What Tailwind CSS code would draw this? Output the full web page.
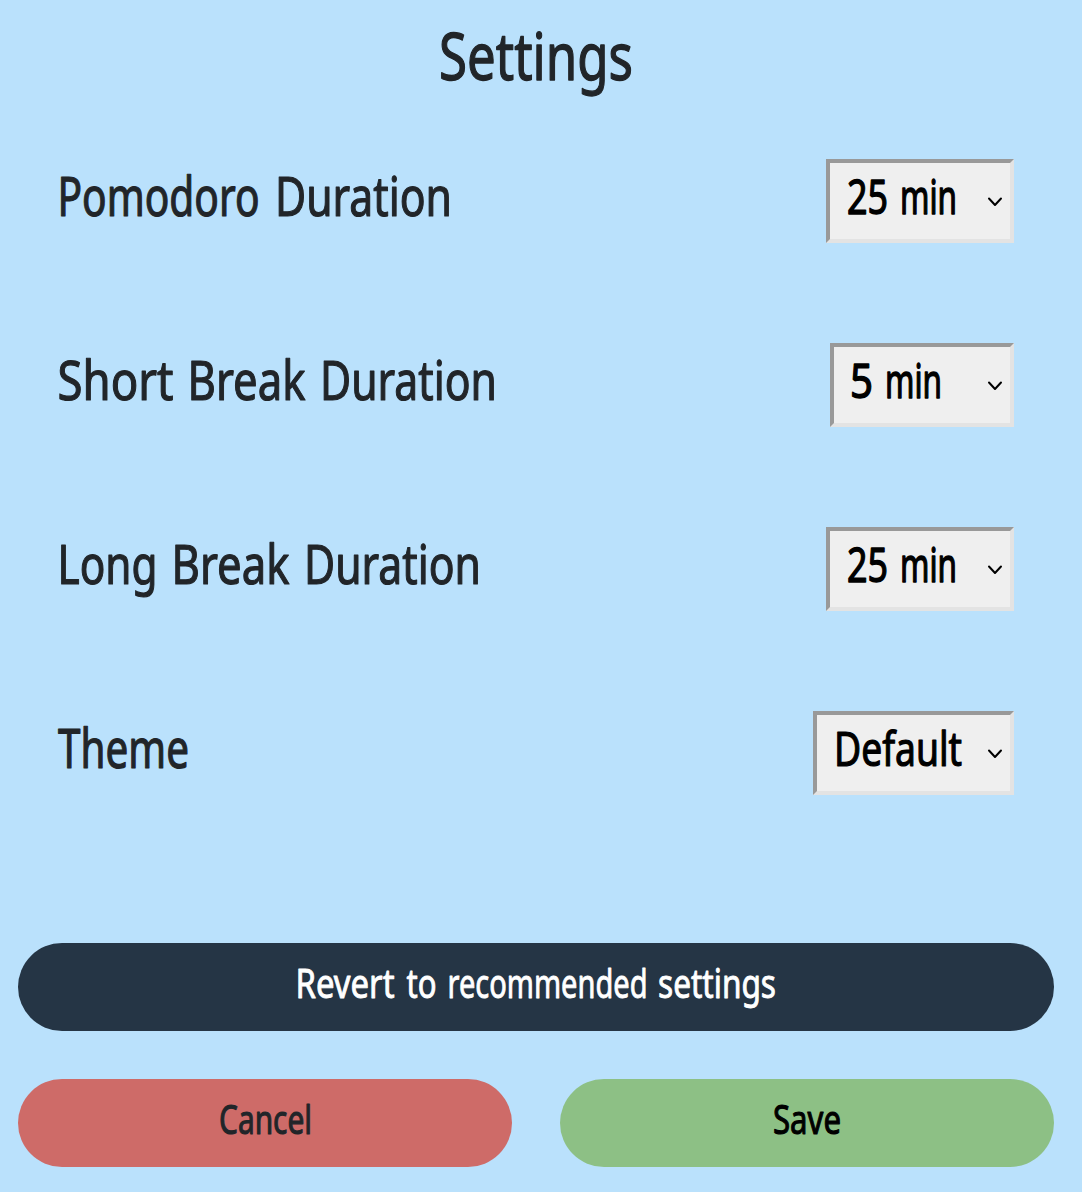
<!DOCTYPE html>
<html lang="en">
<head>
<meta charset="utf-8">
<title>Settings</title>
<script src="https://cdn.jsdelivr.net/npm/@tailwindcss/browser@4"></script>
</head>
<body class="h-[1192px] w-[1082px] overflow-hidden bg-[#bae1fc] font-['Noto_Sans',sans-serif] text-[#212529]">
<main class="flex h-full flex-col pl-[18px] pr-7 [stroke-linejoin:round]">
  <h1 class="h-[159px]">
    <svg class="h-[159px] w-[1036px] overflow-visible fill-current stroke-current text-[65px] stroke-[1.3]"><text y="79.5"><tspan x="421" textLength="194" lengthAdjust="spacingAndGlyphs">Settings</tspan></text></svg>
  </h1>

  <section class="flex flex-col gap-[100px] pl-10 pr-10">
    <div class="flex h-[84px] items-center justify-between">
      <svg class="h-[84px] w-[440px] overflow-visible fill-current stroke-current text-[55px] stroke-[1.2]"><text y="56.5"><tspan x="-0.5" textLength="202" lengthAdjust="spacingAndGlyphs">Pomodoro</tspan> <tspan x="217" textLength="177" lengthAdjust="spacingAndGlyphs">Duration</tspan></text></svg>
      <button class="flex h-[84px] w-[188px] items-center justify-between border-4 border-t-[#999] border-l-[#999] border-r-[#e3e3e3] border-b-[#e3e3e3] bg-[#efefef] pr-[7px] text-black">
        <svg class="h-[76px] w-[140px] overflow-visible fill-current stroke-current text-[47px] stroke-[1.4]"><text y="50.5"><tspan x="17" textLength="41" lengthAdjust="spacingAndGlyphs">25</tspan> <tspan x="70" textLength="57" lengthAdjust="spacingAndGlyphs">min</tspan></text></svg>
        <svg class="h-3 w-4 fill-none stroke-black stroke-2" viewBox="0 0 16 12"><path d="M2 3.500 8 10 14 3.500" stroke-linecap="round"/></svg>
      </button>
    </div>
    <div class="flex h-[84px] items-center justify-between">
      <svg class="h-[84px] w-[440px] overflow-visible fill-current stroke-current text-[55px] stroke-[1.2]"><text y="56.5"><tspan x="-0.5" textLength="116" lengthAdjust="spacingAndGlyphs">Short</tspan> <tspan x="129.5" textLength="118" lengthAdjust="spacingAndGlyphs">Break</tspan> <tspan x="262" textLength="177" lengthAdjust="spacingAndGlyphs">Duration</tspan></text></svg>
      <button class="flex h-[84px] w-[184px] items-center justify-between border-4 border-t-[#999] border-l-[#999] border-r-[#e3e3e3] border-b-[#e3e3e3] bg-[#efefef] pr-[7px] text-black">
        <svg class="h-[76px] w-[136px] overflow-visible fill-current stroke-current text-[47px] stroke-[1.4]"><text y="50.5"><tspan x="16" textLength="23" lengthAdjust="spacingAndGlyphs">5</tspan> <tspan x="51" textLength="57" lengthAdjust="spacingAndGlyphs">min</tspan></text></svg>
        <svg class="h-3 w-4 fill-none stroke-black stroke-2" viewBox="0 0 16 12"><path d="M2 3.500 8 10 14 3.500" stroke-linecap="round"/></svg>
      </button>
    </div>
    <div class="flex h-[84px] items-center justify-between">
      <svg class="h-[84px] w-[440px] overflow-visible fill-current stroke-current text-[55px] stroke-[1.2]"><text y="56.5"><tspan x="-0.5" textLength="100" lengthAdjust="spacingAndGlyphs">Long</tspan> <tspan x="113.5" textLength="118" lengthAdjust="spacingAndGlyphs">Break</tspan> <tspan x="246" textLength="177" lengthAdjust="spacingAndGlyphs">Duration</tspan></text></svg>
      <button class="flex h-[84px] w-[188px] items-center justify-between border-4 border-t-[#999] border-l-[#999] border-r-[#e3e3e3] border-b-[#e3e3e3] bg-[#efefef] pr-[7px] text-black">
        <svg class="h-[76px] w-[140px] overflow-visible fill-current stroke-current text-[47px] stroke-[1.4]"><text y="50.5"><tspan x="17" textLength="41" lengthAdjust="spacingAndGlyphs">25</tspan> <tspan x="70" textLength="57" lengthAdjust="spacingAndGlyphs">min</tspan></text></svg>
        <svg class="h-3 w-4 fill-none stroke-black stroke-2" viewBox="0 0 16 12"><path d="M2 3.500 8 10 14 3.500" stroke-linecap="round"/></svg>
      </button>
    </div>
    <div class="flex h-[84px] items-center justify-between">
      <svg class="h-[84px] w-[440px] overflow-visible fill-current stroke-current text-[55px] stroke-[1.2]"><text y="56.5"><tspan x="0" textLength="131" lengthAdjust="spacingAndGlyphs">Theme</tspan></text></svg>
      <button class="flex h-[84px] w-[201px] items-center justify-between border-4 border-t-[#999] border-l-[#999] border-r-[#e3e3e3] border-b-[#e3e3e3] bg-[#efefef] pr-[7px] text-black">
        <svg class="h-[76px] w-[150px] overflow-visible fill-current stroke-current text-[47px] stroke-[1.2]"><text y="50.5"><tspan x="17" textLength="128" lengthAdjust="spacingAndGlyphs">Default</tspan></text></svg>
        <svg class="h-3 w-4 fill-none stroke-black stroke-2" viewBox="0 0 16 12"><path d="M2 3.500 8 10 14 3.500" stroke-linecap="round"/></svg>
      </button>
    </div>
  </section>

  <footer class="mt-[148px] grid grid-cols-2 gap-12">
    <button class="col-span-2 h-[88px] rounded-full bg-[#253545] text-white">
      <svg class="h-[88px] w-full overflow-visible fill-current stroke-current text-[40px] stroke-[0.9]"><text y="54.5"><tspan x="277.5" textLength="99" lengthAdjust="spacingAndGlyphs">Revert</tspan> <tspan x="388.5" textLength="30" lengthAdjust="spacingAndGlyphs">to</tspan> <tspan x="429.5" textLength="200" lengthAdjust="spacingAndGlyphs">recommended</tspan> <tspan x="640" textLength="118" lengthAdjust="spacingAndGlyphs">settings</tspan></text></svg>
    </button>
    <button class="h-[88px] rounded-full bg-[#ce6b68]">
      <svg class="h-[88px] w-full overflow-visible fill-current stroke-current text-[40px] stroke-[1.1]"><text y="54.5"><tspan x="201" textLength="93" lengthAdjust="spacingAndGlyphs">Cancel</tspan></text></svg>
    </button>
    <button class="h-[88px] rounded-full bg-[#8dc085] text-black">
      <svg class="h-[88px] w-full overflow-visible fill-current stroke-current text-[40px] stroke-[1.1]"><text y="54.5"><tspan x="213" textLength="68" lengthAdjust="spacingAndGlyphs">Save</tspan></text></svg>
    </button>
  </footer>
</main>
</body>
</html>
